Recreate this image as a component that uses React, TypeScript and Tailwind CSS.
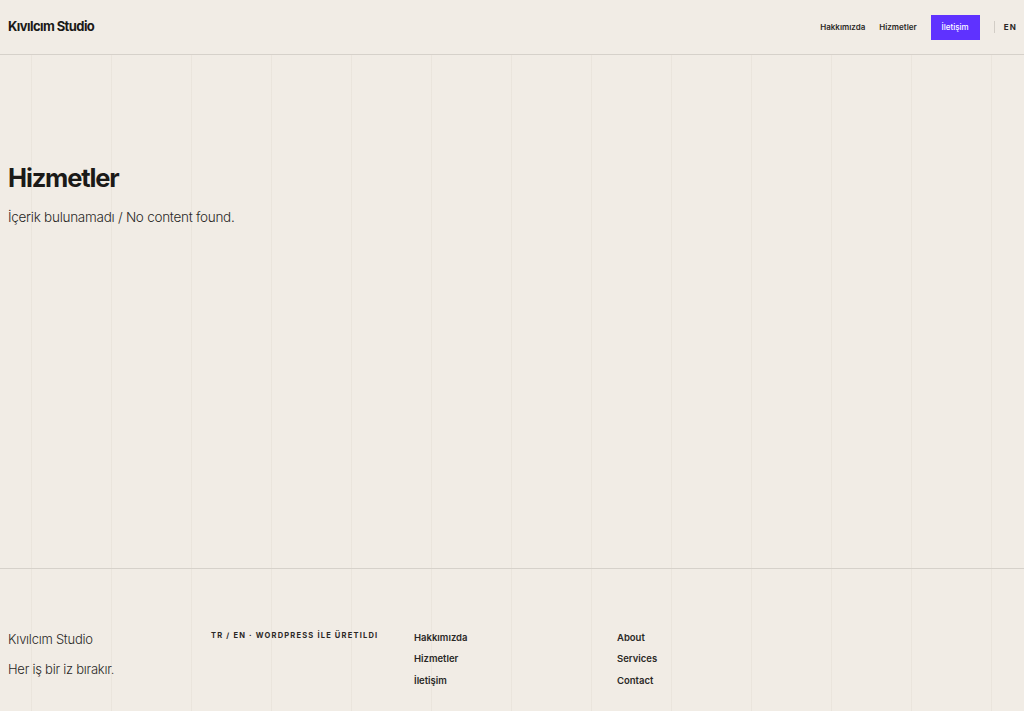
import React from "react";

const navLinks = ["Hakkımızda", "Hizmetler"];
const footerTr = ["Hakkımızda", "Hizmetler", "İletişim"];
const footerEn = ["About", "Services", "Contact"];

// faint vertical column guides behind the page
const guides =
  "bg-[linear-gradient(to_right,rgba(60,40,20,0.04)_1px,transparent_1px)] bg-size-[80px_100%] bg-position-[31px_0]";

function Header() {
  return (
    <header className="h-[55px] flex items-center justify-between pl-2 pr-[7px] border-b border-[#d6d1ca] bg-[#f1ece5]">
      <a className="text-[13px] font-bold tracking-[-0.045em] text-[#1b1a18]">
        Kıvılcım Studio
      </a>
      <nav className="flex items-center">
        {navLinks.map((l) => (
          <a
            key={l}
            className="text-[8px] font-semibold text-[#2a2825] mr-[14px]"
          >
            {l}
          </a>
        ))}
        <a className="h-[25px] w-[49px] flex items-center justify-center bg-[#5f32ff] text-white text-[8px] font-medium">
          İletişim
        </a>
        <span className="w-px h-[12px] bg-[#d2cdc6] ml-[14px] mr-[9px]"></span>
        <span className="text-[8px] font-bold tracking-[0.15em] text-[#2a2825]">
          EN
        </span>
      </nav>
    </header>
  );
}

export default function App() {
  return (
    <div
      className={`min-h-screen bg-[#f1ece5] text-[#1b1a18] ${guides}`}
      style={{ fontFamily: "Inter, 'Noto Sans', sans-serif" }}
    >
      <Header />

      {/* Page body */}
      <main className="h-[513px] px-2 pt-[110px]">
        <h1 className="text-[25.5px] leading-none font-bold tracking-[-0.045em]">
          Hizmetler
        </h1>
        <p className="mt-[16px] text-[13.5px] font-light tracking-[-0.02em] text-[#2a2825]">
          İçerik bulunamadı / No content found.
        </p>
      </main>

      {/* Footer */}
      <footer className="border-t border-[#d6d1ca] h-[144px] px-2 pt-[61px] grid grid-cols-[203px_203px_203px_203px]">
        <div className="flex flex-col gap-[10px] text-[13px] font-light tracking-[-0.02em] text-[#2a2825]">
          <span>Kıvılcım Studio</span>
          <span>Her iş bir iz bırakır.</span>
        </div>
        <div className="pt-[2px] text-[7.5px] leading-none font-bold tracking-[0.16em] uppercase text-[#2a2825]">
          TR / EN · WordPress İle Üretildi
        </div>
        <ul className="flex flex-col gap-[7px] pt-[1px] text-[9.5px] font-semibold text-[#2a2825]">
          {footerTr.map((l) => (
            <li key={l}>{l}</li>
          ))}
        </ul>
        <ul className="flex flex-col gap-[7px] pt-[1px] text-[9.5px] font-semibold text-[#2a2825]">
          {footerEn.map((l) => (
            <li key={l}>{l}</li>
          ))}
        </ul>
      </footer>
    </div>
  );
}
